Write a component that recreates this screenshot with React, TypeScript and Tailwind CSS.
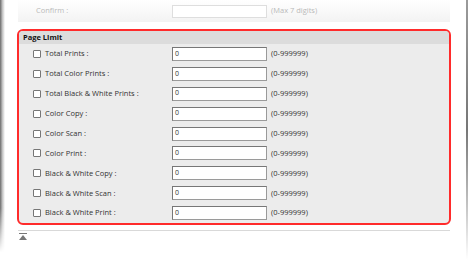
const rows = [
  "Total Prints :",
  "Total Color Prints :",
  "Total Black & White Prints :",
  "Color Copy :",
  "Color Scan :",
  "Color Print :",
  "Black & White Copy :",
  "Black & White Scan :",
  "Black & White Print :",
];

const App = () => {
  return (
    <div
      className="flex h-[260px] w-[468px] bg-white text-[7.5px] text-[#333]"
      style={{ fontFamily: '"Open Sans", "Noto Sans", sans-serif' }}
    >
      {/* left frame shadow */}
      <div className="w-[5px] bg-gradient-to-r from-[#6b6b6b] via-[#c4c4c4] to-white [mask-image:linear-gradient(to_bottom,black_80%,transparent_97%)]" />

      <div className="flex flex-1 flex-col pl-[12px] pr-[15px]">
        {/* Confirm (above, faded) */}
        <div className="mx-[1px] flex h-[22px] items-center bg-gradient-to-b from-white to-[#f3f3f3] text-[#b9b9b9]">
          <span className="w-[154px] pl-[18px]">Confirm :</span>
          <div className="h-[13px] w-[95px] border border-[#dedede] bg-white" />
          <span className="ml-[4px]">(Max 7 digits)</span>
        </div>

        {/* Page Limit */}
        <div className="mt-[7px] overflow-hidden rounded-[6px] border-2 border-[#ff2b2b] bg-[#ececec]">
          <div className="flex h-[13px] items-center bg-[#dcdcdc] pl-[4px] font-bold text-[#111]">
            Page Limit
          </div>
          <div className="flex flex-col">
            {rows.map((label) => (
              <div key={label} className="flex h-[19.9px] items-center pl-[14px]">
                <div className="flex w-[139px] items-center gap-[4px]">
                  <span className="h-[8px] w-[8px] rounded-[1px] border border-[#767676] bg-white" />
                  <span>{label}</span>
                </div>
                <div className="flex h-[14px] w-[95px] items-center border border-[#9a9a9a] border-l-[#777] border-t-[#777] bg-white pl-[2px] text-[7px]">
                  0
                </div>
                <span className="ml-[4px]">(0-999999)</span>
              </div>
            ))}
          </div>
        </div>

        <div className="mx-[1px] mt-[5px] h-[1px] bg-[#d9d9d9]" />
        <div className="pl-[2px] pt-[2px]">
          <svg width="8" height="7" viewBox="0 0 8 7">
            <rect x="0" y="0" width="8" height="1" fill="#777" />
            <polygon points="4,2 8,7 0,7" fill="#777" />
          </svg>
        </div>
      </div>

      {/* right frame edge */}
      <div className="w-[2px] bg-gradient-to-b from-[#9a9a9a] via-[#777] to-white" />
    </div>
  );
};

export default App;
